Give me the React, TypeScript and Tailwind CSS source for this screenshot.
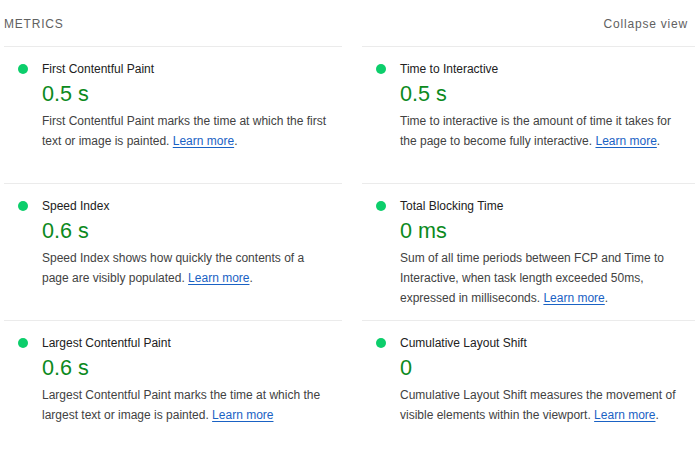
import React from "react";

type Metric = {
  title: string;
  value: string;
  desc: string;
  dot?: boolean;
};

const metrics: Metric[] = [
  {
    title: "First Contentful Paint",
    value: "0.5 s",
    desc: "First Contentful Paint marks the time at which the first text or image is painted.",
    dot: true,
  },
  {
    title: "Time to Interactive",
    value: "0.5 s",
    desc: "Time to interactive is the amount of time it takes for the page to become fully interactive.",
    dot: true,
  },
  {
    title: "Speed Index",
    value: "0.6 s",
    desc: "Speed Index shows how quickly the contents of a page are visibly populated.",
    dot: true,
  },
  {
    title: "Total Blocking Time",
    value: "0 ms",
    desc: "Sum of all time periods between FCP and Time to Interactive, when task length exceeded 50ms, expressed in milliseconds.",
    dot: true,
  },
  {
    title: "Largest Contentful Paint",
    value: "0.6 s",
    desc: "Largest Contentful Paint marks the time at which the largest text or image is painted.",
    dot: false,
  },
  {
    title: "Cumulative Layout Shift",
    value: "0",
    desc: "Cumulative Layout Shift measures the movement of visible elements within the viewport.",
    dot: true,
  },
];

function MetricCell({ m }: { m: Metric }) {
  return (
    <div className="flex border-t border-[#ebebeb] pt-[14px] pb-[12px] pr-[12px]">
      <div className="w-[38px] shrink-0 pl-[14px]">
        <div className="mt-[3px] h-[10px] w-[10px] rounded-full bg-[#0cce6b]" />
      </div>
      <div className="flex w-[288px] flex-col">
        <div className="text-[12px] leading-[16px] text-[#212121]">{m.title}</div>
        <div className="mt-[4px] text-[21.6px] leading-[26px] text-[#0c8a1d]">{m.value}</div>
        <div className="mt-[4px] text-[12px] leading-[20px] text-[#424242]">
          {m.desc}{" "}
          <a href="#" className="text-[#1a62c4] underline underline-offset-[2px]">
            Learn more
          </a>
          {m.dot ? "." : ""}
        </div>
      </div>
    </div>
  );
}

export default function App() {
  return (
    <div
      className="h-[453px] w-[695px] overflow-hidden bg-white"
      style={{ fontFamily: '"Liberation Sans", Arial, sans-serif' }}
    >
      <div className="ml-[4px] w-[696px]">
        <div className="flex h-[46px] items-start justify-between pt-[16px] pr-[12px] text-[12px] leading-[16px] tracking-[0.8px] text-[#616161]">
          <span>METRICS</span>
          <span>Collapse view</span>
        </div>
        <div className="grid auto-rows-fr grid-cols-[338px_338px] gap-x-[20px]">
          {metrics.map((m) => (
            <MetricCell key={m.title} m={m} />
          ))}
        </div>
      </div>
    </div>
  );
}
